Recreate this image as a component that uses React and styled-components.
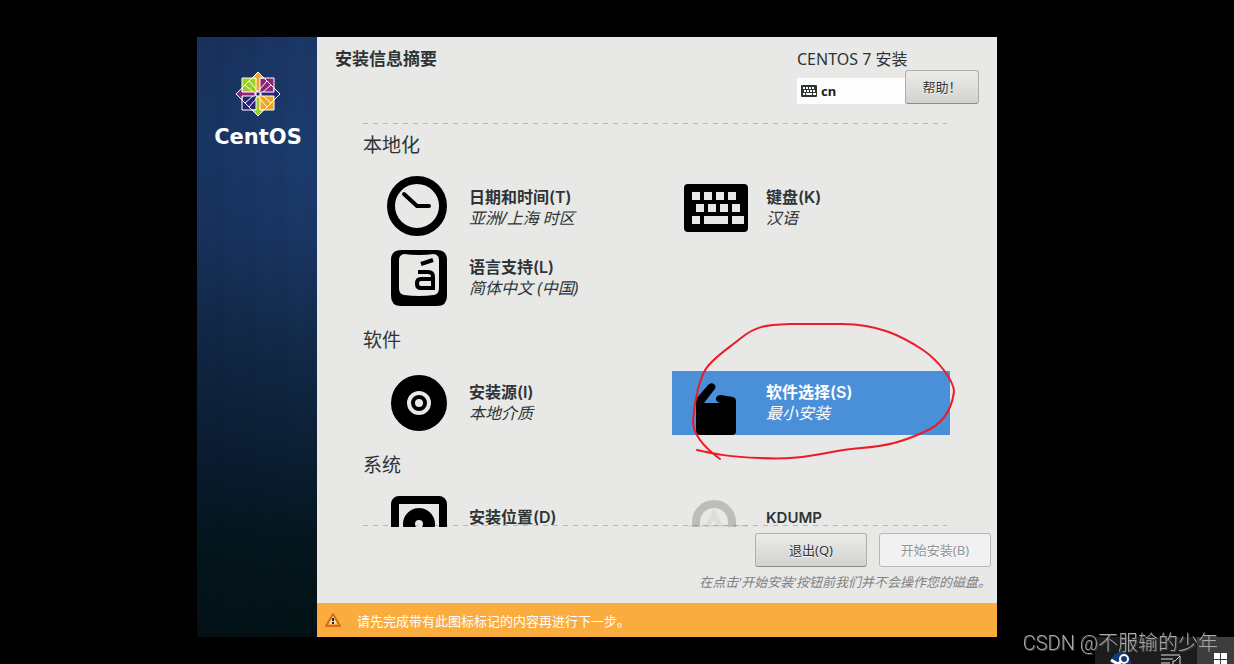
import React from "react";
import styled, { createGlobalStyle, css } from "styled-components";

const GlobalStyle = createGlobalStyle`
  * {
    box-sizing: border-box;
  }
  body {
    margin: 0;
    background: #000;
    color: #2e3436;
    font-family: "Noto Sans", "Noto Sans CJK SC", sans-serif;
    font-size: 16px;
  }
  svg {
    display: block;
  }
`;

const Desktop = styled.div`
  display: flex;
  flex-direction: column;
  height: 100vh;
  padding-top: 37px;
  overflow: hidden;
`;

const Installer = styled.div`
  display: grid;
  grid-template-columns: 120px 1fr;
  flex: 1;
  min-height: 0;
  margin: 0 237px 0 197px;
`;

const Sidebar = styled.aside`
  display: flex;
  flex-direction: column;
  align-items: center;
  gap: 8px;
  padding: 34px 0 0 2px;
  background:
    repeating-linear-gradient(90deg, rgba(0, 8, 20, 0) 0 14px, rgba(0, 8, 20, 0.04) 20px 24px, rgba(0, 8, 20, 0) 31px),
    linear-gradient(90deg, rgba(0, 10, 25, 0.16), rgba(0, 10, 25, 0)),
    linear-gradient(#1b3868 0, #1c3d70 19%, #1a3868 32%, #132c4c 50%, #0b1f35 69%, #04171f 84%, #021214 100%);
`;

const Wordmark = styled.div`
  color: #fff;
  font: bold 21px/24px "DejaVu Sans", sans-serif;
`;

const Content = styled.main`
  display: flex;
  flex-direction: column;
  min-height: 0;
  background: #e8e8e6;
`;

const Header = styled.header`
  display: flex;
  justify-content: space-between;
  height: 86px;
  padding: 10px 18px 0;
`;

const PageTitle = styled.h1`
  margin: 0;
  font-size: 17px;
  line-height: 24px;
`;

const Product = styled.div`
  width: 182px;
  font-size: 16px;
  line-height: 24px;
`;

const HeaderTools = styled.div`
  display: flex;
  align-items: flex-end;
  margin-top: -1px;
`;

const Layout = styled.button`
  display: flex;
  align-items: center;
  flex: 1;
  gap: 4px;
  height: 26px;
  padding: 0 4px;
  border: 0;
  background: #fdfdfd;
  color: #1a1c1d;
  font: bold 13px/18px "Noto Sans", sans-serif;
`;

const Button = styled.button`
  width: ${({ $width }) => $width}px;
  height: 34px;
  padding: 0;
  border: 1px solid #aeaeac;
  border-bottom-color: #8b8b89;
  border-radius: 3px;
  background: linear-gradient(#ebebea, #d2d2d0);
  color: #2e3436;
  font: 13px/20px "Noto Sans", "Noto Sans CJK SC", sans-serif;
  text-shadow: 0 1px #fff;

  &:disabled {
    border-color: #b7b7b5;
    background: #f1f1f1;
    color: #919494;
  }
`;

const dashes = css`repeating-linear-gradient(90deg, #b8b8b6 0 5px, transparent 5px 10px)`;

const SpokeList = styled.div`
  flex: 1;
  min-height: 0;
  margin: 0 47px 0 46px;
  padding-top: 10px;
  overflow: hidden;
  background:
    ${dashes} 0 0 / calc(100% - 3px) 1px no-repeat,
    ${dashes} 0 calc(100% - 1px) / calc(100% - 3px) 1px no-repeat;
`;

const Category = styled.section`
  margin-bottom: 18px;
`;

const CategoryTitle = styled.h2`
  margin: 0 0 19px;
  font-size: 19px;
  font-weight: 400;
  line-height: 24px;
`;

const Spokes = styled.div`
  display: grid;
  grid-template-columns: 1fr 1fr;
  gap: 6px 19px;
  margin-left: 12px;
`;

const Spoke = styled.button`
  display: flex;
  align-items: center;
  gap: 18px;
  height: 64px;
  padding: 0 12px;
  border: 0;
  background: ${({ $selected }) => ($selected ? "#4a90d9" : "transparent")};
  color: ${({ $selected }) => ($selected ? "#fff" : "#2e3436")};
  font: 16px/21px "Noto Sans", "Noto Sans CJK SC", sans-serif;
  text-align: left;

  svg {
    flex: none;
    color: #000;
    opacity: ${({ $dim }) => ($dim ? 0.18 : 1)};
  }
`;

const SpokeName = styled.span`
  display: block;
  font-family: Inter, "Noto Sans CJK SC", sans-serif;
  font-size: ${({ $latin }) => ($latin ? 15 : 16)}px;
  font-weight: 600;
`;

const SpokeStatus = styled.span`
  display: block;
  min-height: 21px;
  font-style: italic;
`;

const Footer = styled.footer`
  display: flex;
  flex-direction: column;
  align-items: flex-end;
  gap: 6px;
  padding: 6px 6px 12px;
`;

const Actions = styled.div`
  display: flex;
  gap: 12px;
`;

const Note = styled.p`
  margin: 0;
  color: #7f8282;
  font-size: 13px;
  font-style: italic;
  line-height: 18px;
`;

const Warning = styled.div`
  display: flex;
  align-items: center;
  gap: 16px;
  height: 34px;
  padding: 0 8px;
  background: #fbac3f;
  color: #fff;
  font-size: 13px;
`;

const Taskbar = styled.nav`
  display: flex;
  justify-content: flex-end;
  height: 27px;
`;

const Task = styled.button`
  width: ${({ $width }) => $width}px;
  padding: 0;
  border: 0;
  background: ${({ $active }) => ($active ? "#3d3d3d" : "#1c1c1c")};
`;

const Watermark = styled.div`
  position: fixed;
  right: 16px;
  bottom: 7px;
  color: #a9a9a9;
  font: 20px/28px Roboto, "Noto Sans CJK SC", sans-serif;
  font-weight: 300;
  text-shadow: 1px 1px #444;
`;

// Freehand loop around the software selection spoke
const Marker = styled.svg`
  position: absolute;
  left: 690px;
  top: 320px;
  pointer-events: none;
`;

const icons = {
  clock: (
    <>
      <circle cx="30" cy="30" r="26" fill="none" stroke="currentColor" strokeWidth="8" />
      <path d="M17 18 30 30H42" fill="none" stroke="currentColor" strokeWidth="4" strokeLinecap="round" strokeLinejoin="round" />
    </>
  ),
  keyboard: (
    <path
      fillRule="evenodd"
      fill="currentColor"
      d="M4 8H60Q64 8 64 12V52Q64 56 60 56H4Q0 56 0 52V12Q0 8 4 8ZM8 16V24H16V16ZM20 16V24H28V16ZM32 16V24H40V16ZM44 16V24H52V16ZM12 28V36H20V28ZM24 28V36H32V28ZM36 28V36H44V28ZM48 28V36H56V28ZM8 40V48H16V40ZM20 40V48H44V40ZM48 40V48H60V40Z"
    />
  ),
  language: (
    <>
      <path
        fillRule="evenodd"
        fill="currentColor"
        d="M14 4H50Q60 4 60 14V50Q60 60 50 60H14Q4 60 4 50V14Q4 4 14 4ZM17 8Q12 9 12 14V42Q12 48 17 49Q32 51 47 49Q52 48 52 42V14Q52 9 47 8Q32 10 17 8Z"
      />
      <path d="M31 26H41Q46 26 46 31V42H34Q30 42 30 38V37Q30 33 34 33H46M34 18 46 14" fill="none" stroke="currentColor" strokeWidth="4" />
    </>
  ),
  disc: (
    <>
      <circle cx="32" cy="32" r="20" fill="none" stroke="currentColor" strokeWidth="16" />
      <circle cx="32" cy="32" r="6" fill="none" stroke="currentColor" strokeWidth="4" />
    </>
  ),
  packageBox: (
    <path
      fill="currentColor"
      d="M12 28 24 14Q27 11 30 13Q33 16 30 19L20 32H36Q31 30 32 27Q33 24 37 24L49 26Q52 27 52 30V60Q52 64 48 64H16Q12 64 12 60Z"
    />
  ),
  drive: (
    <>
      <rect x="8" y="4" width="48" height="56" rx="4" fill="none" stroke="currentColor" strokeWidth="8" />
      <circle cx="32" cy="28" r="10" fill="none" stroke="currentColor" strokeWidth="12" />
    </>
  ),
  kdump: (
    <>
      <path d="M12 64V26a18 18 0 0 1 36 0V64" fill="none" stroke="currentColor" strokeWidth="8" />
      <path d="M22 34 30 18 38 34" fill="none" stroke="currentColor" strokeWidth="5" opacity="0.25" />
      <path d="M4 29H64V31H4Z" fill="currentColor" opacity="0.3" />
    </>
  ),
};

const categories = [
  {
    title: "本地化",
    spokes: [
      { icon: "clock", name: "日期和时间(T)", status: "亚洲/上海 时区" },
      { icon: "keyboard", name: "键盘(K)", status: "汉语" },
      { icon: "language", name: "语言支持(L)", status: "简体中文 (中国)" },
    ],
  },
  {
    title: "软件",
    spokes: [
      { icon: "disc", name: "安装源(I)", status: "本地介质" },
      { icon: "packageBox", name: "软件选择(S)", status: "最小安装", selected: true },
    ],
  },
  {
    title: "系统",
    spokes: [
      { icon: "drive", name: "安装位置(D)" },
      { icon: "kdump", name: "KDUMP", dim: true, latin: true },
    ],
  },
];

const quarter = "M-16-16H0V0H-16Z";
const arrows = ["#efa724", "#262577", "#9ccd2a", "#932279"];

const CentosLogo = () => (
  <svg width="46" height="46" viewBox="-23 -23 46 46" stroke="#fff" strokeWidth="1">
    <path d={quarter} fill="#9ccd2a" />
    <path d={quarter} fill="#932279" transform="rotate(90)" />
    <path d={quarter} fill="#efa724" transform="rotate(180)" />
    <path d={quarter} fill="#262577" transform="rotate(270)" />
    {arrows.map((fill, i) => (
      <g key={fill} transform={`rotate(${i * 90})`}>
        <path d="M0-22-6-16H-2V-3H2V-16H6Z" fill={fill} />
        <path d="M-11-11 0-22 11-11" fill="none" />
        <path d="M-13-9-5-2M-9-13-2-5" fill="none" strokeWidth="1" />
      </g>
    ))}
    <path d="M-2-2H2V2H-2Z" fill="#262577" />
  </svg>
);

const SmallKeyboard = () => (
  <svg width="16" height="12" viewBox="0 0 16 12">
    <rect width="16" height="12" rx="1" fill="#2e3436" />
    <path d="M2 3H14M3 6H14" stroke="#fff" strokeWidth="2" strokeDasharray="2 1" />
    <path d="M2 9H4M5 9H11M12 9H15" stroke="#fff" strokeWidth="2" />
  </svg>
);

const WarningIcon = () => (
  <svg width="16" height="16" viewBox="0 0 16 16">
    <path d="M8 2 15 14H1Z" fill="#f8a050" stroke="#d96b12" strokeWidth="2" strokeLinejoin="round" />
    <path d="M8 4 12 12H4Z" fill="#f6d9b3" />
    <path d="M8 6V9M8 10V12" stroke="#222" strokeWidth="2" />
  </svg>
);

const Card = ({ icon, name, status, selected, dim, latin }) => (
  <Spoke type="button" $selected={selected} $dim={dim}>
    <svg width="64" height="64" viewBox="0 0 64 64">
      {icons[icon]}
    </svg>
    <span>
      <SpokeName $latin={latin}>{name}</SpokeName>
      <SpokeStatus>{status}</SpokeStatus>
    </span>
  </Spoke>
);

const App = () => (
  <Desktop lang="zh-CN">
    <GlobalStyle />
    <Installer>
      <Sidebar>
        <CentosLogo />
        <Wordmark>CentOS</Wordmark>
      </Sidebar>
      <Content>
        <Header>
          <PageTitle>安装信息摘要</PageTitle>
          <Product>
            CENTOS 7 安装
            <HeaderTools>
              <Layout type="button">
                <SmallKeyboard />
                cn
              </Layout>
              <Button type="button" $width={74}>帮助！</Button>
            </HeaderTools>
          </Product>
        </Header>
        <SpokeList>
          {categories.map(({ title, spokes }) => (
            <Category key={title}>
              <CategoryTitle>{title}</CategoryTitle>
              <Spokes>
                {spokes.map((spoke) => (
                  <Card key={spoke.name} {...spoke} />
                ))}
              </Spokes>
            </Category>
          ))}
        </SpokeList>
        <Footer>
          <Actions>
            <Button type="button" $width={112}>退出(Q)</Button>
            <Button type="button" $width={112} disabled>开始安装(B)</Button>
          </Actions>
          <Note>在点击'开始安装'按钮前我们并不会操作您的磁盘。</Note>
        </Footer>
        <Warning>
          <WarningIcon />
          请先完成带有此图标标记的内容再进行下一步。
        </Warning>
      </Content>
    </Installer>
    <Taskbar>
      <Task type="button" $width={51} aria-label="Steam">
        <svg width="51" height="27" viewBox="0 0 51 27">
          <circle cx="26" cy="25" r="10" fill="#153a78" />
          <circle cx="29" cy="22" r="4" fill="none" stroke="#fff" strokeWidth="2" />
          <path d="M16 23 23 27 27 24" fill="none" stroke="#fff" strokeWidth="3" />
        </svg>
      </Task>
      <Task type="button" $width={51} aria-label="Music">
        <svg width="51" height="27" viewBox="0 0 51 27" fill="none" stroke="#ddd" strokeWidth="1">
          <path d="M15 18H34M15 22H27M15 26H24M27 27V24H29L34 19V27" />
        </svg>
      </Task>
      <Task type="button" $width={37} $active aria-label="Start">
        <svg width="37" height="27" viewBox="0 0 37 27">
          <path d="M17 16H23V22H17ZM24 16H30V22H24ZM17 23H23V27H17ZM24 23H30V27H24Z" fill="#fff" />
        </svg>
      </Task>
    </Taskbar>
    <Watermark>CSDN @不服输的少年</Watermark>
    <Marker width="270" height="145" viewBox="690 320 270 145" fill="none" stroke="#ed1c24" strokeWidth="2" strokeLinecap="round">
      <path d="M720 459C705 448 693 434 693 421C694 402 700 375 708 366C718 354 729 348 741 338C756 326 765 325 790 324H842C878 324 902 336 923 350C939 361 954 381 954 392C951 413 939 426 924 432C902 442 887 446 861 448C824 451 805 461 760 458C729 457 715 454 697 450" />
    </Marker>
  </Desktop>
);

export default App;
